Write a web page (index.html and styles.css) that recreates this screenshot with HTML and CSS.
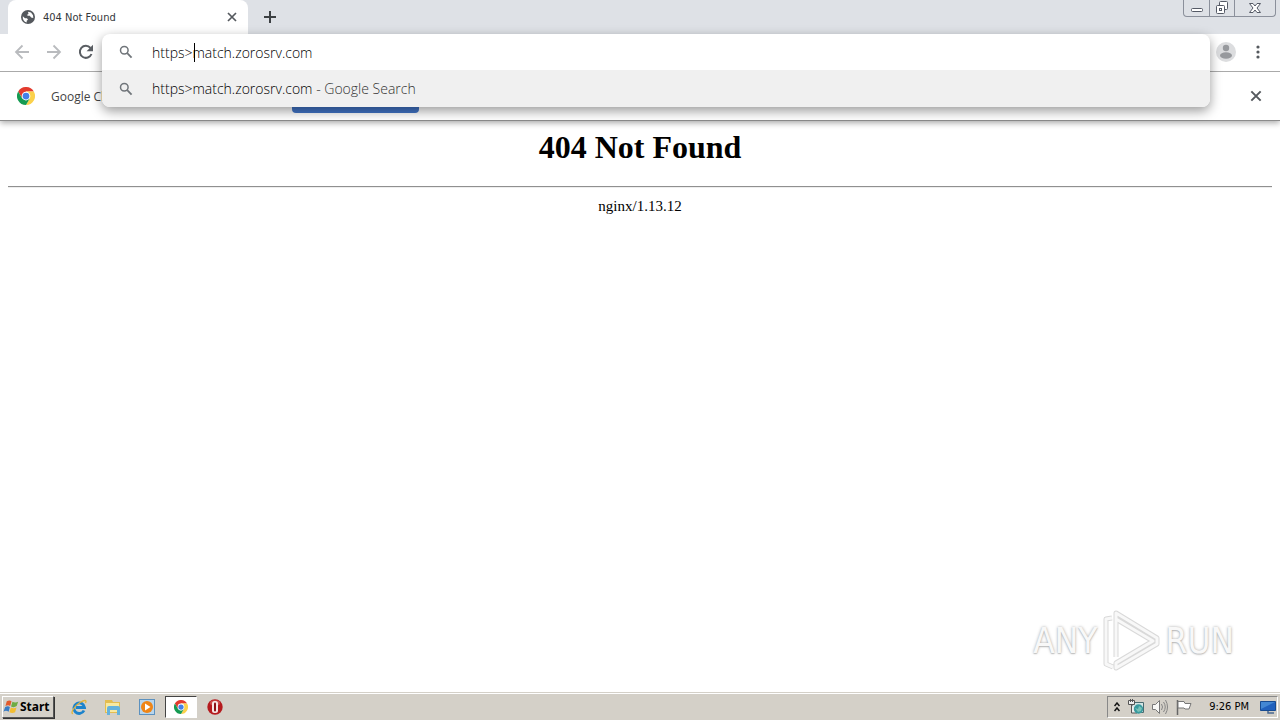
FILE: index.html
```html
<!DOCTYPE html>
<html lang="en">
<head>
<meta charset="utf-8">
<title>404 Not Found</title>
<link rel="stylesheet" href="styles.css">
</head>
<body>
<svg class="defs" aria-hidden="true">
  <symbol id="chrome" viewBox="0 0 24 24">
    <path fill="#e33b2e" d="M1.600 6A12 12 0 0 1 22.400 6H12L6.800 15z"/>
    <path fill="#fbd14b" d="M22.400 6A12 12 0 0 1 12 24L17.200 15 12 6z"/>
    <path fill="#159b52" d="M12 24A12 12 0 0 1 1.600 6L6.800 15 12 18l5.200-3z"/>
    <circle cx="12" cy="12" r="5.800" fill="#fff"/>
    <circle cx="12" cy="12" r="4.500" fill="#4480e8"/>
  </symbol>
  <symbol id="search" viewBox="0 0 14 14">
    <circle cx="5.300" cy="5.300" r="3.800" fill="none" stroke="#70757a" stroke-width="1.500"/>
    <path d="m8.200 8.200 4.400 4.400" stroke="#70757a" stroke-width="1.800"/>
  </symbol>
  <symbol id="close" viewBox="0 0 12 12">
    <path d="m2 2 8 8M10 2l-8 8" stroke="#55595e" stroke-width="1.700"/>
  </symbol>
</svg>
<header class="browser">
  <div class="tabstrip">
    <div class="tab">
      <svg class="globe" viewBox="0 0 14 14"><circle cx="7" cy="7" r="7" fill="#54585d"/><path fill="#fff" d="M1.800 6.300 4 8.200h2l1 1.500-1.300 1v1.800C3 11.800 1.400 9.500 1.800 6.300zM7 1.700l3 .8 2 2.700.3 2.800-2.200-.6-1.300-1.600H7L5.800 5 7.500 4z"/></svg>
      <span class="tab-title">404 Not Found</span>
      <button class="icon-button" aria-label="Close tab"><svg class="close"><use href="#close"/></svg></button>
    </div>
    <button class="icon-button new-tab" aria-label="New tab"><svg viewBox="0 0 12 12" class="plus"><path d="M6 0v12M0 6h12" stroke="#3c4043" stroke-width="2"/></svg></button>
    <div class="window-controls">
      <button class="window-button" aria-label="Minimize"><svg class="wide" viewBox="0 0 14 14"><rect x="1.500" y="7.500" width="11" height="3" rx="1" fill="#fff" stroke="#555a66"/></svg></button>
      <button class="window-button" aria-label="Restore"><svg class="wide" viewBox="0 0 14 14"><g fill="#fff" stroke="#555a66"><rect x="4.500" y=".5" width="8" height="8" rx="1"/><rect x="1.500" y="4.500" width="8" height="8" rx="1"/><rect x="4.500" y="7.500" width="2" height="2"/></g></svg></button>
      <button class="window-button window-close" aria-label="Close"><svg class="wide" viewBox="0 0 14 14"><path fill="#fff" stroke="#555a66" d="M1.500 2.500h3.500l2 2.500 2-2.500h3.500L9 7l3.500 4.500H9L7 9l-2 2.500H1.500L5 7z"/></svg></button>
    </div>
  </div>
  <div class="toolbar">
    <button class="icon-button" aria-label="Back"><svg class="nav" viewBox="0 0 16 16"><path d="M15 8H2m6.500-6.500L2 8l6.500 6.500" fill="none" stroke="#b9bbbe" stroke-width="1.800"/></svg></button>
    <button class="icon-button" aria-label="Forward"><svg class="nav" viewBox="0 0 16 16"><path d="M1 8h13M7.500 1.500 14 8l-6.500 6.500" fill="none" stroke="#b9bbbe" stroke-width="1.800"/></svg></button>
    <button class="icon-button" aria-label="Reload"><svg class="nav" viewBox="0 0 16 16"><path d="M13.500 10A6 6 0 1 1 12.500 4" fill="none" stroke="#5a5e63" stroke-width="2"/><path d="M15 .8v6.400H8.600z" fill="#5a5e63"/></svg></button>
    <div class="omnibox">
      <div class="omnibox-popup">
        <div class="omnibox-row">
          <svg class="search"><use href="#search"/></svg>
          <div class="field">
            <input type="text" aria-label="Address and search bar" value="https&gt;match.zorosrv.com">
            <div class="caret-track" aria-hidden="true"><span class="caret"></span></div>
          </div>
        </div>
        <div class="omnibox-row suggestion">
          <svg class="search"><use href="#search"/></svg>
          <div>https&gt;match.zorosrv.com <span class="muted">- Google Search</span></div>
        </div>
      </div>
    </div>
    <button class="icon-button avatar" aria-label="Profile"><svg viewBox="0 0 20 20"><circle cx="10" cy="10" r="10" fill="#dcdddf"/><circle cx="10" cy="6" r="3.200" fill="#97999d"/><ellipse cx="10" cy="13.500" rx="6" ry="3.200" fill="#97999d"/></svg></button>
    <button class="icon-button menu" aria-label="Menu"><svg viewBox="0 0 4 14"><g fill="#55595e"><circle cx="2" cy="2" r="1.600"/><circle cx="2" cy="7" r="1.600"/><circle cx="2" cy="12" r="1.600"/></g></svg></button>
  </div>
  <div class="infobar">
    <svg class="chrome-logo"><use href="#chrome"/></svg>
    <span class="infobar-text">Google Ch</span>
    <button class="primary" aria-label="Set as default"></button>
    <button class="icon-button dismiss" aria-label="Dismiss"><svg class="close big"><use href="#close"/></svg></button>
  </div>
</header>
<main class="page">
  <h1>404 Not Found</h1>
  <hr>
  <p>nginx/1.13.12</p>
  <div class="watermark" role="img" aria-label="ANY RUN">
    <span>ANY</span>
    <svg viewBox="0 0 58 64"><g fill="none" stroke-linejoin="round"><path d="M13 48V4L54 29v6L13 59v-5l37-22-37-22M9 9 3 10v45l7 3" stroke="#d9d9d9" stroke-width="5"/><path d="M13 48V4L54 29v6L13 59v-5l37-22-37-22M9 9 3 10v45l7 3" stroke="#f8f8f8" stroke-width="3"/></g></svg>
    <span>RUN</span>
  </div>
</main>
<footer class="taskbar">
  <button class="start"><svg viewBox="0 0 18 16"><path fill="#e25a2c" d="M4 2q3-2 5 0L7.600 7q-2-1.500-5 0z"/><path fill="#6eac43" d="M10 2.500q3 1.700 6 0L14.500 7q-3 2-6 .5z"/><path fill="#397cc4" d="M2.300 8q3-1.500 5 0L6 13q-3-1.800-5.500 0z"/><path fill="#f2bd31" d="M8.300 8.500q3 1.700 6 0l-1.500 5q-3 1.700-6 0z"/></svg>Start</button>
  <nav class="apps" aria-label="Quick launch">
    <button class="app" aria-label="Internet Explorer"><svg viewBox="0 0 16 16"><path d="M13 11.500A5.300 5.300 0 1 1 13.500 8.500H5" fill="none" stroke="#1c83cc" stroke-width="2.800"/><path d="M2 14.500C-1 15 3 7 9 3.500 14 .5 16 1 14.500 4" fill="none" stroke="#e4b43a" stroke-width="1.300"/></svg></button>
    <button class="app" aria-label="File Explorer"><svg viewBox="0 0 16 16"><path d="M0 1h7l1 2h7v11H0z" fill="#e4bd50"/><path d="M1 4h13v9H1z" fill="#f8e9a0"/><path d="M2 16V9q0-2 2-2h9q2 0 2 2v7h-3v-5H5v5z" fill="#65b2dc"/></svg></button>
    <button class="app" aria-label="Media Player"><svg viewBox="0 0 16 16"><rect x=".5" y=".5" width="15" height="15" fill="#b8d5ec" stroke="#5c91bf"/><circle cx="8" cy="8" r="6" fill="#ef8516"/><path d="m6 4.500 5.500 3.500L6 11.500z" fill="#fff"/></svg></button>
    <button class="app active" aria-label="Chrome"><svg class="small"><use href="#chrome"/></svg></button>
    <button class="app" aria-label="Opera"><svg viewBox="0 0 16 16"><circle cx="8" cy="8" r="7.700" fill="#b51a1e"/><ellipse cx="8" cy="4" rx="5" ry="2.700" fill="#cf4c4a"/><rect x="5" y="2" width="6" height="12" rx="2.500" fill="#f6e8e6"/><rect x="7" y="3.500" width="2" height="9" rx="1" fill="#8c1015"/></svg></button>
  </nav>
  <div class="tray">
    <svg class="chevrons" viewBox="0 0 6 10"><path d="m.5 4 2.500-3 2.500 3m-5 5L3 6l2.500 3" fill="none" stroke="#111" stroke-width="1.500"/></svg>
    <svg viewBox="0 0 16 16"><path d="M4.500 3.500h11v10h-11z" fill="#d4e6e6" stroke="#496b70"/><path d="M.5 1.500h6v4h-6zM2.500 0v3m2-3v3M3.500 5v9H9" fill="#eee" stroke="#555"/><circle cx="10.500" cy="10" r="4.700" fill="#399a9e"/><path d="m7 9 3 1 1-3 3 2-1 3-3 1z" fill="#79c2b8"/></svg>
    <svg viewBox="0 0 16 16"><path d="M.5 5.500h3l4-4v13l-4-4h-3z" fill="#f7f7f5" stroke="#777"/><path d="M9.500 5q2 3 0 6m2-8q3.500 5 0 10m2-12q4 7 0 14" fill="none" stroke="#858585"/></svg>
    <svg viewBox="0 0 16 16"><path d="M1.500 1v15" stroke="#666" stroke-width="1.500"/><path d="M2 2.500h6l1 2h6l-2 5.500H9l-1-1H2z" fill="#fff" stroke="#777"/></svg>
    <time>9:26 PM</time>
    <svg viewBox="0 0 16 16"><path d="M.5 2.500h15v9H.5z" fill="#2161bd" stroke="#174b91"/><path d="M1 3h14L1 10z" fill="#4387d3"/><path d="M8 12v2h6" fill="none" stroke="#496890" stroke-width="1.500"/></svg>
  </div>
</footer>
</body>
</html>
```
FILE: styles.css
```css
* { box-sizing: border-box; }
body {
  margin: 0;
  min-height: 100vh;
  display: flex;
  flex-direction: column;
  background: #fff;
  color: #000;
  font-family: "Noto Sans", sans-serif;
}
svg { display: block; flex: none; }
.defs { position: absolute; width: 0; height: 0; }
button { font: inherit; margin: 0; padding: 0; border: 0; background: none; color: inherit; }
.icon-button { display: flex; align-items: center; justify-content: center; flex: none; }
.browser { border-bottom: 1px solid #8b8b8b; box-shadow: 0 2px 6px #aaa; }
.tabstrip { display: flex; height: 34px; padding: 0 4px 0 8px; background: #dee1e6; }
.tab {
  display: flex;
  align-items: center;
  flex: 0 1 240px;
  padding: 0 10px 0 13px;
  gap: 8px;
  border-radius: 8px 8px 0 0;
  background: #fff;
}
.globe { width: 14px; height: 14px; }
.tab-title { flex: 1; font-family: "DejaVu Sans Condensed", "Noto Sans", sans-serif; font-size: 11px; color: #33363a; }
.close { width: 12px; height: 12px; }
.close.big { width: 14px; height: 14px; }
.new-tab { width: 44px; }
.plus { width: 12px; height: 12px; }
.window-controls {
  display: flex;
  height: 17px;
  margin-left: auto;
  border: 1px solid #8b909b;
  border-top: 0;
  border-radius: 0 0 4px 4px;
}
.window-button { display: flex; align-items: center; justify-content: center; width: 25px; }
.window-button + .window-button { border-left: 1px solid #8b909b; }
.window-button.window-close { width: 41px; }
.wide { width: 14px; height: 14px; }
.toolbar { display: flex; align-items: center; height: 38px; padding: 0 16px 2px 14px; gap: 16px; border-bottom: 1px solid #aaa; }
.nav { width: 16px; height: 16px; }
.omnibox { position: relative; flex: 1; align-self: stretch; margin-right: -10px; margin-left: -8px; }
.omnibox-popup {
  position: absolute;
  inset: 0 0 auto;
  z-index: 1;
  overflow: hidden;
  border-radius: 8px;
  background: #fff;
  box-shadow: 0 4px 12px rgba(0, 0, 0, .4);
  font-family: "Open Sans", sans-serif;
  font-size: 14px;
  font-weight: 300;
}
.omnibox-row { display: flex; align-items: center; height: 36px; padding-left: 17px; gap: 19px; }
.suggestion { height: 37px; background: #f0f0f0; }
.search { width: 14px; height: 14px; }
.field { position: relative; flex: 1; }
.field input { display: block; width: 100%; padding: 0; border: 0; outline: 0; background: none; font: inherit; color: #000; }
.caret-track { position: absolute; inset: 0 auto 0 42px; }
.caret { display: block; width: 1px; height: 100%; background: #000; }
.muted { color: #333; }
.avatar svg { width: 20px; height: 20px; }
.menu svg { width: 4px; height: 14px; }
.menu { width: 12px; }
.infobar { display: flex; align-items: center; height: 48px; padding: 0 17px; }
.chrome-logo { width: 18px; height: 18px; }
.infobar-text { width: 241px; margin-left: 16px; font-family: "Open Sans", sans-serif; font-size: 12px; color: #444; }
.primary { width: 127px; height: 34px; border-radius: 4px; background: #4275c8; }
.dismiss { margin-left: auto; }
.page { flex: 1; display: flex; flex-direction: column; padding: 8px; font-family: "Liberation Serif", serif; text-align: center; }
h1 { margin: 0 0 21px; font-size: 32px; line-height: 36px; }
hr { width: 100%; margin: 0 0 8px; border: 0; border-top: 1px solid #909090; border-bottom: 1px solid #eee; }
.page p { margin: 0; font-size: 15px; line-height: 20px; }
.watermark {
  display: flex;
  align-items: center;
  align-self: flex-end;
  gap: 5px;
  margin: auto 38px 11px 0;
  color: #f8f8f8;
  font: 35px "DejaVu Sans Condensed", sans-serif;
  text-shadow: 0 0 3px #aaa, 0 1px 1px #ccc;
}
.watermark svg { width: 58px; height: 64px; }
.taskbar {
  display: flex;
  align-items: center;
  height: 28px;
  padding: 0 2px;
  background: #d4d0c8;
  border-top: 1px solid #d4d0c8;
  box-shadow: inset 0 1px #fff;
  font: 11px "DejaVu Sans Condensed", sans-serif;
}
.start {
  display: flex;
  align-items: center;
  width: 52px;
  height: 22px;
  border: 1px solid;
  border-color: #fff #555 #555 #fff;
  box-shadow: 1px 1px #333;
  font: bold 12px "Noto Sans", sans-serif;
}
.start svg { width: 17px; height: 16px; }
.apps { display: flex; margin-left: 9px; gap: 2px; }
.app { display: flex; align-items: center; justify-content: center; width: 32px; height: 22px; }
.app svg { width: 16px; height: 16px; }
.app svg.small { width: 14px; height: 14px; }
.app.active { border: 1px solid; border-color: #444 #fff #fff #444; background: #fff; }
.tray {
  display: flex;
  align-items: center;
  height: 22px;
  margin-left: auto;
  padding: 0 1px 0 6px;
  gap: 8px;
  border: 1px solid;
  border-color: #888 #fff #fff #888;
}
.tray svg { width: 16px; height: 16px; }
.tray .chevrons { width: 6px; height: 10px; }
.tray time { margin: 0 3px 0 9px; }
```
